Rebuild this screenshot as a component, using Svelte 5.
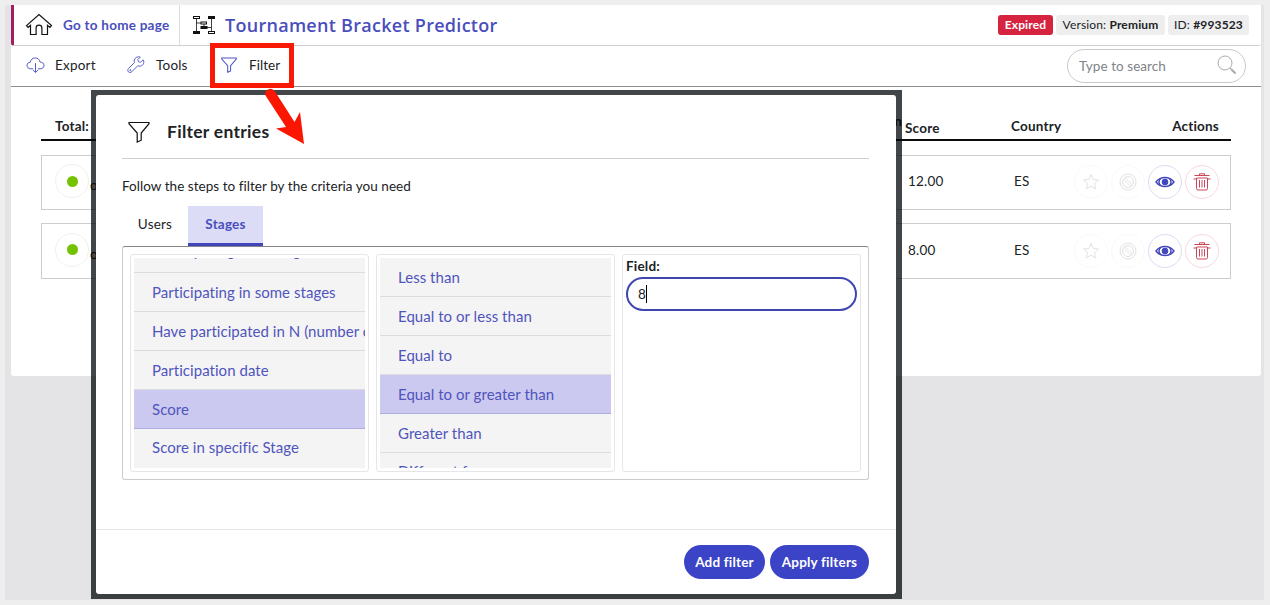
<script lang="ts">
	interface Entry {
		id:      number
		score:   string
		country: string
	}

	const entries: Entry[] = [
		{ id: 1, score: '12.00', country: 'ES' },
		{ id: 2, score: '8.00',  country: 'ES' },
	]

	const criteria = [
		'Participating in all stages',
		'Participating in some stages',
		'Have participated in N (number of) stages',
		'Participation date',
		'Score',
		'Score in specific Stage',
	]

	const operators = [
		'Less than',
		'Equal to or less than',
		'Equal to',
		'Equal to or greater than',
		'Greater than',
		'Different from',
	]

	let criterion = $state('Score')
	let operator  = $state('Equal to or greater than')
	let tab       = $state('Stages')
	let value     = $state('8')
</script>

{#snippet funnel()}
	<svg class="funnel" viewBox="0 0 22 22" aria-hidden="true">
		<path d="M1 1.5h20v1.2L13.200 12v7.200L9.200 21V12L1 2.700z" />
	</svg>
{/snippet}

<div class="page">
	<div class="app">
		<main class="panel">
			<header class="topbar">
				<a class="home" href="#home">
					<svg class="home__icon" viewBox="0 0 28 24" aria-hidden="true">
						<path d="M1.500 12.600 14 1.600l12.500 11-1.600 1.800-2.400-2v9.100h-5.600v-6.600c0-3.800-5.800-3.800-5.800 0v6.600H5.500v-9.100l-2.400 2z" />
					</svg>
					<span>Go to home page</span>
				</a>
				<svg class="bracket" viewBox="0 0 24 20" aria-hidden="true">
					<path d="M4.500 4v12M4.500 8h4.500M15 12.500h4.500M19.500 4v12M12 9v3" />
					<rect class="hollow" x="1.500" y="1.500" width="6" height="2" />
					<rect x="16.500" y="1.500" width="6" height="2" />
					<rect class="hollow" x="9" y="7" width="5.500" height="2" />
					<rect x="9" y="11.500" width="6" height="2" />
					<rect x="1.500" y="16.500" width="6" height="2" />
					<rect class="hollow" x="16.500" y="16.500" width="6" height="2" />
				</svg>
				<h1>Tournament Bracket Predictor</h1>
				<div class="badges">
					<span class="badge badge--expired">Expired</span>
					<span class="badge badge--version">Version: <b>Premium</b></span>
					<span class="badge badge--id">ID: <b>#993523</b></span>
				</div>
			</header>

			<nav class="toolbar">
				<button class="tool tool--export">
					<svg viewBox="0 0 20 18" aria-hidden="true">
						<path d="M7.500 12.500H5C2.600 12.500 1 11 1 9c0-2 1.500-3.400 3.500-3.500C5 2.700 7 1 9.700 1c2.700 0 4.600 1.700 5 4.300C17.400 5.300 19 7 19 9c0 2-1.600 3.500-4 3.500h-2.500M10 6.500V16M7.300 13.800 10 16.500l2.700-2.700" />
					</svg>
					Export
				</button>
				<button class="tool tool--tools">
					<svg viewBox="0 0 20 20" aria-hidden="true">
						<path d="M17.800 4.200 15 7l-2.300-.7L12 4l2.800-2.800C12 .2 9 1.500 8.200 4.300c-.3 1.100-.2 2 .2 2.900L1.700 13.900c-1.200 1.200-1 2.800-.1 3.700s2.500 1.100 3.700-.1L12 10.800c3.200 1.500 6.500-.6 6.700-3.900.1-1-.3-2-.9-2.700z" />
						<circle cx="3.700" cy="15.700" r=".6" />
					</svg>
					Tools
				</button>
				<button class="tool tool--filter">
					{@render funnel()}
					Filter
				</button>
				<label class="search">
					<input type="text" placeholder="Type to search" />
					<svg viewBox="0 0 20 20" aria-hidden="true">
						<circle cx="8" cy="8" r="7" />
						<path d="m13 13 1.500 1.500" />
						<path class="handle" d="m14 14 4.500 4.500" />
					</svg>
				</label>
			</nav>

			<section class="entries">
				<div class="thead">
					<span class="col-total">Total:</span>
					<span class="col-position">n</span>
					<span class="col-score">Score</span>
					<span class="col-country">Country</span>
					<span class="col-actions">Actions</span>
				</div>
				{#each entries as entry (entry.id)}
					<div class="row">
						<span class="status"><i></i></span>
						<span class="name">os</span>
						<span class="score">{entry.score}</span>
						<span class="country">{entry.country}</span>
						<div class="actions">
							<button class="action action--off" aria-label="Favourite">
								<svg viewBox="0 0 18 18"><path d="m9 1.500 2.200 5 5.300.5-4 3.600 1.200 5.400L9 13.200 4.300 16l1.200-5.400-4-3.600 5.300-.5z" /></svg>
							</button>
							<button class="action action--off" aria-label="Exclude">
								<svg viewBox="0 0 18 18">
									<circle cx="9" cy="9" r="8" /><circle cx="9" cy="9" r="5.500" />
									<path d="m4.500 6 7.500 7.500M6 4.500l7.500 7.500" />
								</svg>
							</button>
							<button class="action action--view" aria-label="View">
								<svg viewBox="0 0 20 12">
									<path d="M1 6c4.500-6 13.500-6 18 0-4.500 6-13.500 6-18 0z" />
									<path d="M5.500 2.600c-1.800 2-1.800 4.800 0 6.800M14.500 2.600c1.800 2 1.800 4.800 0 6.800" />
									<circle cx="10" cy="6" r="2.900" />
								</svg>
							</button>
							<button class="action action--delete" aria-label="Delete">
								<svg viewBox="0 0 18 18">
									<path d="M1.500 2.500h15M.5 6h2.500M15 6h2.500M6.500 2.500V.8h5v1.700M3.500 5v10.500q0 1.500 1.500 1.500h8q1.500 0 1.500-1.500V5zM6.500 7v7.500M9 7v7.500M11.500 7v7.500" />
								</svg>
							</button>
						</div>
					</div>
				{/each}
			</section>
		</main>
	</div>

	<div class="modal-frame">
		<div class="modal" role="dialog" aria-label="Filter entries">
			<div class="modal__head">
				{@render funnel()}
				<h2>Filter entries</h2>
			</div>
			<p class="modal__hint">Follow the steps to filter by the criteria you need</p>
			<div class="tabs">
				{#each ['Users', 'Stages'] as name}
					<button class="tab" class:tab--active={tab === name} onclick={() => (tab = name)}>{name}</button>
				{/each}
			</div>
			<div class="steps">
				<div class="step">
					<ul class="options options--scrolled">
						{#each criteria as item}
							<li class:selected={criterion === item}>
								<button onclick={() => (criterion = item)}>{item}</button>
							</li>
						{/each}
					</ul>
				</div>
				<div class="step">
					<ul class="options">
						{#each operators as item}
							<li class:selected={operator === item}>
								<button onclick={() => (operator = item)}>{item}</button>
							</li>
						{/each}
					</ul>
				</div>
				<div class="step step--field">
					<span class="field__label">Field:</span>
					<div class="field"><span>{value}</span><i class="caret"></i></div>
				</div>
			</div>
			<div class="modal__foot">
				<button class="btn btn--add">Add filter</button>
				<button class="btn btn--apply">Apply filters</button>
			</div>
		</div>
	</div>

	<!-- Callout: box around the Filter button, arrow towards the dialog -->
	<div class="callout"></div>
	<svg class="callout-arrow" viewBox="0 0 46 60" aria-hidden="true">
		<path d="M3.500 7.500Q2 3 6 1.500q4-2 7 2L32.500 34l5.500-10L42 56 14 40.500l10-1.500z" />
	</svg>
</div>

<style>
	:global(body) { background: #eee; }

	.page {
		position: relative;
		box-sizing: border-box;
		width: 1270px;
		height: 605px;
		padding: 5px 6px 5px 5px;
		overflow: hidden;
		font-family: Lato, 'Open Sans', sans-serif;
		font-size: 13.5px;
		letter-spacing: 0.2px;
		color: #202225;
	}
	.page * { box-sizing: border-box; }

	button, input {
		font: inherit;
		letter-spacing: inherit;
		color: inherit;
		background: none;
		border: 0;
		padding: 0;
		white-space: nowrap;
	}
	svg { fill: none; stroke: currentColor; flex-shrink: 0; }

	.app {
		height: 595px;
		background: #e4e4e6;
		padding: 0 3px 0 6px;
	}
	.panel {
		height: 371px;
		background: #fff;
		border-radius: 0 0 3px 3px;
	}

	/* ── Top bar ── */
	.topbar {
		display: flex;
		align-items: center;
		height: 41px;
		border-bottom: 1px solid #cfcfd4;
		border-left: 3px solid #9f1f63;
		border-radius: 0 0 3px 3px;
		padding-right: 12px;
	}
	.home {
		display: flex;
		align-items: center;
		width: 166px;
		height: 40px;
		padding-left: 11px;
		border-right: 1px solid #ddd;
		color: #4a4ebd;
		font-weight: 700;
		text-decoration: none;
		white-space: nowrap;
	}
	.home__icon { width: 28px; height: 24px; margin-right: 10px; color: #111; stroke-width: 1.2; }
	.home span { padding-bottom: 1px; letter-spacing: 0.25px; }
	.bracket { width: 24px; height: 20px; margin-left: 12px; color: #111; }
	.bracket path { stroke-width: 0.8; }
	.bracket rect { fill: currentColor; }
	.bracket .hollow { fill: #fff; }
	h1 {
		margin: 0 0 0 9px;
		font: 600 18px/24px 'Open Sans', sans-serif;
		letter-spacing: 0.28px;
		color: #4a4ebd;
		white-space: nowrap;
	}
	.badges { display: flex; gap: 3px; margin-left: auto; }
	.badge {
		height: 20px;
		border-radius: 3px;
		background: #eee;
		font-size: 12px;
		line-height: 20px;
		letter-spacing: 0.15px;
		text-align: center;
		white-space: nowrap;
	}
	.badge--expired { width: 55px; background: #d6233f; color: #fff; font-weight: 700; }
	.badge--version { width: 109px; }
	.badge--id { width: 81px; }

	/* ── Toolbar ── */
	.toolbar {
		display: flex;
		align-items: center;
		height: 41px;
		padding: 0 15px 1px 15px;
		border-bottom: 1px solid #8b8d90;
	}
	.tool { display: flex; align-items: center; height: 24px; padding-bottom: 2px; }
	.tool svg { color: #4b50c4; }
	.tool--export { width: 101px; }
	.tool--export svg { width: 19px; height: 17px; margin: 2px 10px 0 0; }
	.tool--tools { width: 94px; }
	.tool--tools svg { width: 18px; height: 18px; margin: 1px 11px 0 0; }
	.tool--filter { letter-spacing: 0.05px; }
	.tool--filter svg { width: 16px; height: 16px; margin: 1px 12px 0 0; stroke-width: 1.4; }
	.search {
		display: flex;
		align-items: center;
		width: 179px;
		height: 34px;
		margin-left: auto;
		padding: 0 8px 0 11px;
		border: 1px solid #c9c9cc;
		border-radius: 17px;
	}
	.search input { flex: 1; min-width: 0; outline: none; letter-spacing: 0.05px; }
	.search input::placeholder { color: #808387; opacity: 1; }
	.search svg { width: 20px; height: 20px; margin-bottom: 1px; color: #aaa; }
	.search .handle { stroke-width: 2; }

	/* ── Entries ── */
	.entries { padding: 26px 30px 0; }
	.thead {
		display: flex;
		align-items: center;
		height: 28px;
		border-bottom: 2px solid #0c0c0e;
		font-weight: 700;
	}
	.col-total { width: 816px; padding-left: 14px; }
	.col-position { width: 48px; text-align: right; padding-right: 3px; align-self: flex-start; }
	.col-score { width: 106px; padding-top: 3px; }
	.col-actions { margin-left: auto; padding-right: 12px; }
	.row {
		display: flex;
		align-items: center;
		height: 55px;
		margin-top: 14px;
		padding: 0 11px 3px 13px;
		border: 1px solid #cdcdd0;
	}
	.row + .row { height: 56px; margin-top: 13px; }
	.status {
		display: flex;
		align-items: center;
		justify-content: center;
		width: 34px;
		height: 34px;
		border: 1px solid #f1f1ea;
		border-radius: 50%;
	}
	.status i { width: 11px; height: 11px; border-radius: 50%; background: #74c202; }
	.name { width: 819px; padding-left: 1px; padding-top: 8px; color: #222; }
	.score { width: 106px; }
	.actions { display: flex; gap: 3px; margin-left: auto; padding-top: 2px; }
	.action {
		display: flex;
		align-items: center;
		justify-content: center;
		width: 34px;
		height: 34px;
		border: 1px solid #dcdcf4;
		border-radius: 50%;
	}
	.action svg { width: 18px; height: 18px; }
	.action--off { color: #e2e2e3; border-color: #fafafa; }
	.action--view { color: #4146bd; }
	.action--view svg { width: 20px; height: 12px; }
	.action--view circle { fill: currentColor; }
	.action--view path { stroke-width: 1.4; }
	.action--delete { color: #cd4458; border-color: #f6d9df; }

	/* ── Dialog ── */
	.modal-frame {
		position: absolute;
		left: 91px;
		top: 90px;
		width: 811px;
		height: 509px;
		padding: 5px 6px 5px 5px;
		background: rgba(2, 5, 8, 0.74);
	}
	.modal {
		display: flex;
		flex-direction: column;
		height: 499px;
		padding: 0 27px 0 26px;
		background: #fff;
		border-radius: 3px;
	}
	.modal__head {
		display: flex;
		align-items: center;
		height: 64px;
		padding: 10px 0 0 6px;
		border-bottom: 1px solid #cfcfd2;
	}
	.modal__head .funnel { width: 22px; height: 22px; margin-top: 1px; stroke-width: 1.2; color: #111; }
	h2 {
		margin: 0 0 0 17px;
		font-size: 17.5px;
		line-height: 24px;
		font-weight: 700;
		letter-spacing: 0.28px;
	}
	.modal__hint { margin: 18px 0 11px; line-height: 18px; letter-spacing: 0.04px; white-space: nowrap; }
	.tabs { display: flex; height: 40px; }
	.tab { width: 66px; height: 40px; padding-bottom: 1px; border-bottom: 3px solid transparent; }
	.tab--active {
		width: 75px;
		background: #dcdcf6;
		border-color: #4046b9;
		color: #4a4ebd;
		font-weight: 700;
	}
	.steps {
		display: flex;
		gap: 7px;
		height: 234px;
		padding: 7px;
		border: 1px solid #ccc;
		border-top-color: #85868a;
		border-radius: 3px;
	}
	.step {
		width: 239px;
		height: 218px;
		padding: 3px;
		border: 1px solid #e6e6e8;
		border-radius: 3px;
	}
	.options {
		height: 210px;
		margin: 0;
		padding: 0;
		overflow: hidden;
		list-style: none;
		background: #f4f4f4;
		font-size: 15px;
		letter-spacing: 0.04px;
		color: #5054be;
	}
	.options li {
		display: flex;
		align-items: center;
		height: 39.1px;
		padding: 0 0 1px 18px;
		border-bottom: 1px solid #dcdce0;
	}
	.options li:last-child { padding-bottom: 3px; }
	.options--scrolled li:first-child { margin-top: -24px; padding-bottom: 6px; }
	.options .selected { background: #cbc9ef; border-bottom-color: #aeade0; }
	.field__label { display: block; height: 16px; line-height: 16px; font-weight: 700; }
	.field {
		display: flex;
		align-items: center;
		width: 231px;
		height: 34px;
		margin-top: 3px;
		padding-left: 10px;
		border: 2px solid #4046b0;
		border-radius: 17px;
	}
	.caret { width: 1px; height: 18px; background: #000; }
	.modal__foot {
		display: flex;
		gap: 5px;
		justify-content: flex-end;
		height: 65px;
		margin: auto -27px 0 -26px;
		padding: 15px 27px 0 0;
		border-top: 1px solid #e4e4e6;
	}
	.btn {
		height: 34px;
		padding-bottom: 1px;
		border-radius: 17px;
		background: #3b44c6;
		color: #fff;
		font-weight: 700;
	}
	.btn--add { width: 81px; }
	.btn--apply { width: 99px; }

	.callout {
		position: absolute;
		left: 210px;
		top: 43px;
		width: 84px;
		height: 45px;
		border: 5px solid #f91a05;
	}
	.callout-arrow {
		position: absolute;
		left: 262px;
		top: 88px;
		width: 46px;
		height: 60px;
	}
	.callout-arrow path { fill: #fb1602; stroke: none; }
</style>
